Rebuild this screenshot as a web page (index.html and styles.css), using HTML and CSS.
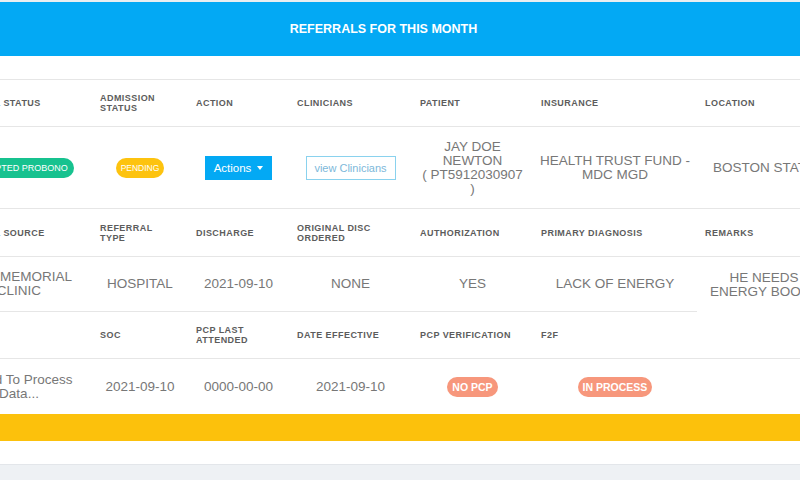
FILE: index.html
```html
<!DOCTYPE html>
<html lang="en">
<head>
<meta charset="utf-8">
<title>Referrals for this month</title>
<link rel="stylesheet" href="styles.css">
</head>
<body>
<div class="page">
  <div class="title-bar"><h1 class="title">REFERRALS FOR THIS MONTH</h1></div>
  <div class="spacer"></div>
  <div class="scroller">
    <div class="table">
      <div class="row">
        <div class="cell head first h46">REFERRAL STATUS</div>
        <div class="cell head h46">ADMISSION STATUS</div>
        <div class="cell head h46">ACTION</div>
        <div class="cell head h46">CLINICIANS</div>
        <div class="cell head h46">PATIENT</div>
        <div class="cell head h46">INSURANCE</div>
        <div class="cell head h46">LOCATION</div>
      </div>
      <div class="row">
        <div class="cell data h81"><span class="pill pill-green">ACCEPTED PROBONO</span></div>
        <div class="cell data h81"><span class="pill pill-yellow">PENDING</span></div>
        <div class="cell data h81"><button class="btn-actions">Actions <span class="caret"></span></button></div>
        <div class="cell data h81"><button class="btn-outline">view Clinicians</button></div>
        <div class="cell data h81"><p class="stack">JAY DOE NEWTON<br>( PT5912030907 )</p></div>
        <div class="cell data h81 tight">HEALTH TRUST FUND - MDC MGD</div>
        <div class="cell data h81">BOSTON STATE</div>
      </div>
      <div class="row">
        <div class="cell head first h47">REFERRAL SOURCE</div>
        <div class="cell head h47">REFERRAL TYPE</div>
        <div class="cell head h47">DISCHARGE</div>
        <div class="cell head h47">ORIGINAL DISC ORDERED</div>
        <div class="cell head h47">AUTHORIZATION</div>
        <div class="cell head h47">PRIMARY DIAGNOSIS</div>
        <div class="cell head h47">REMARKS</div>
      </div>
      <div class="row">
        <div class="cell data h54">CITY MEMORIAL CLINIC</div>
        <div class="cell data h54">HOSPITAL</div>
        <div class="cell data h54">2021-09-10</div>
        <div class="cell data h54">NONE</div>
        <div class="cell data h54">YES</div>
        <div class="cell data h54">LACK OF ENERGY</div>
        <div class="cell data h54 no-line">HE NEEDS ENERGY BOOST</div>
      </div>
      <div class="row">
        <div class="cell head first h46"></div>
        <div class="cell head h46">SOC</div>
        <div class="cell head h46">PCP LAST ATTENDED</div>
        <div class="cell head h46">DATE EFFECTIVE</div>
        <div class="cell head h46">PCP VERIFICATION</div>
        <div class="cell head h46">F2F</div>
        <div class="cell head h46"></div>
      </div>
      <div class="row">
        <div class="cell data h55 no-line">Failed To Process Data...</div>
        <div class="cell data h55 no-line">2021-09-10</div>
        <div class="cell data h55 no-line">0000-00-00</div>
        <div class="cell data h55 no-line">2021-09-10</div>
        <div class="cell data h55 no-line"><span class="pill pill-salmon">NO PCP</span></div>
        <div class="cell data h55 no-line"><span class="pill pill-salmon">IN PROCESS</span></div>
        <div class="cell data h55 no-line"></div>
      </div>
    </div>
  </div>
  <div class="yellow-bar"></div>
  <div class="foot"></div>
  <div class="grey-area"></div>
</div>
</body>
</html>
```
FILE: styles.css
```css
* { box-sizing: border-box; }
html, body { margin: 0; padding: 0; background: #fff; }
body { font-family: "Liberation Sans", Arial, sans-serif; }

.page {
  width: 800px;
  height: 480px;
  overflow: hidden;
  display: flex;
  flex-direction: column;
  background: #fff;
}

.title-bar {
  flex: 0 0 56px;
  border-top: 2px solid #e9eef1;
  background: #03a9f4;
  display: flex;
  align-items: center;
  justify-content: center;
  padding-right: 33px;
}
.title {
  margin: 0;
  color: #fff;
  font-size: 12.5px;
  font-weight: bold;
}

.spacer {
  flex: 0 0 24px;
  border-bottom: 1px solid #e6e6e6;
}

.scroller {
  overflow: hidden;
  flex: 0 0 auto;
}
.table {
  width: 885px;
  margin-left: -54px;
}
.row {
  display: grid;
  grid-template-columns: 146px 96px 101px 123px 121px 164px 134px;
}
.cell {
  border-bottom: 1px solid #e6e6e6;
  display: flex;
  align-items: center;
}
.cell.no-line { border-bottom: none; }

.head {
  padding: 0 8px;
  font-size: 9px;
  font-weight: bold;
  letter-spacing: 0.45px;
  line-height: 10px;
  color: #5c5c5c;
}
.head.first { padding-left: 2px; }
.data {
  justify-content: center;
  text-align: center;
  padding: 0 8px;
  font-size: 13.5px;
  line-height: 14px;
  color: #777;
}
.data.tight { padding: 0 5px; }
.stack { margin: 0; }

.h46 { height: 47px; }
.h47 { height: 48px; }
.h81 { height: 82px; }
.h54 { height: 55px; }
.h55 { height: 55px; }

.pill {
  display: inline-flex;
  align-items: center;
  height: 20px;
  border-radius: 10px;
  color: #fff;
  white-space: nowrap;
}
.pill-green {
  background: #17c28f;
  font-size: 9px;
  padding: 0 6px;
}
.pill-yellow {
  background: #fdc30f;
  font-size: 8.5px;
  padding: 0 5px;
}
.pill-salmon {
  background: #f7977c;
  font-size: 10.5px;
  font-weight: bold;
  padding: 0 5px;
}

.btn-actions {
  height: 24px;
  width: 67px;
  border: none;
  border-radius: 0;
  background: #03a9f4;
  color: #fff;
  font-family: "Liberation Sans", Arial, sans-serif;
  font-size: 11.5px;
  padding: 0;
  display: inline-flex;
  align-items: center;
  justify-content: center;
  gap: 6px;
}
.caret {
  width: 0;
  height: 0;
  border-left: 3.5px solid transparent;
  border-right: 3.5px solid transparent;
  border-top: 4px solid #fff;
}
.btn-outline {
  height: 24px;
  width: 90px;
  border: 1px solid #8ad2ee;
  border-radius: 0;
  background: #fff;
  color: #7db8da;
  font-family: "Liberation Sans", Arial, sans-serif;
  font-size: 11px;
  padding: 0;
}

.yellow-bar {
  flex: 0 0 27px;
  background: #fcc10c;
}
.foot {
  flex: 0 0 24px;
  border-bottom: 1px solid #e3e6ea;
}
.grey-area {
  flex: 1 1 auto;
  background: #eef1f4;
}
```
